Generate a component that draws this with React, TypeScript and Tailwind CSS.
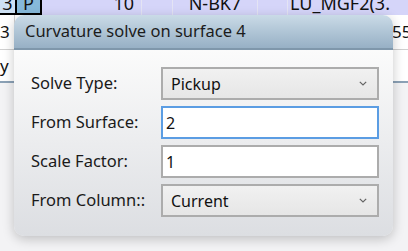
import React from 'react';

const font = { fontFamily: '"Noto Sans", "Open Sans", sans-serif' };

function Chevron() {
    return (
        <svg width="8" height="5" viewBox="0 0 8 5" className="text-[#666]">
            <path d="M0.8 0.8 L4 4 L7.2 0.8" fill="none" stroke="currentColor" strokeWidth="1.2" />
        </svg>
    );
}

function Dropdown({ value }: { value: string }) {
    return (
        <div className="h-[33px] flex items-center justify-between border-2 border-[#acacac] bg-gradient-to-b from-[#f1f1f1] to-[#e6e6e6] pl-[8px] pr-[10px] text-[16px] text-[#111]">
            <span>{value}</span>
            <Chevron />
        </div>
    );
}

function TextBox({ value, focused }: { value: string; focused?: boolean }) {
    return (
        <div
            className={
                focused
                    ? 'h-[33px] flex items-center border-2 border-[#5b9de3] bg-white pl-[3px] text-[16px] text-[#111]'
                    : 'h-[33px] flex items-center border-2 border-[#acacac] bg-white pl-[3px] text-[16px] text-[#111]'
            }
        >
            {value}
        </div>
    );
}

function Row({ label, children }: { label: string; children: React.ReactNode }) {
    return (
        <div className="flex items-center">
            <div className="w-[130px] text-[16.5px] text-[#1a1a1a] whitespace-nowrap">{label}</div>
            <div className="flex-1">{children}</div>
        </div>
    );
}

export default function App() {
    return (
        <div className="relative w-[408px] h-[251px] overflow-hidden bg-[#f3f3f5]" style={font}>
            {/* grid behind the dialog */}
            <div className="flex h-[15px] bg-[#d5d5f9] text-[18px] leading-none text-[#111] overflow-hidden">
                <div className="w-[15px] bg-[#cde0f3] border-b-2 border-black flex items-end justify-center">
                    <span className="mb-[1px]">3</span>
                </div>
                <div className="w-[27px] bg-[#86b9da] border-x-2 border-b-2 border-black flex items-end justify-center">
                    <span className="mb-[1px]">P</span>
                </div>
                <div className="w-[100px] border-r border-[#e4e4f4] flex items-end justify-end pr-[7px]">
                    <span className="mb-[3px]">10</span>
                </div>
                <div className="w-[31px] border-r border-[#e4e4f4]" />
                <div className="w-[85px] border-r border-[#e4e4f4] flex items-end justify-center">
                    <span className="mb-[3px]">N-BK7</span>
                </div>
                <div className="w-[30px] border-r border-[#e4e4f4]" />
                <div className="flex-1 flex items-end pl-[2px] whitespace-nowrap">
                    <span className="mb-[3px]">LU_MGF2(3.</span>
                </div>
            </div>
            <div className="flex h-[35px] bg-white border-b border-[#d0d0d0] text-[17px] text-[#111]">
                <div className="w-[15px] border-r border-[#cfcfcf] flex items-center">3</div>
                <div className="flex-1" />
                <div className="w-[16px] flex items-center whitespace-nowrap">55</div>
            </div>
            <div className="flex h-[33px] bg-white border-b-2 border-[#8ba1b6] text-[17px] text-[#111]">
                <div className="w-[15px] border-r border-[#cfcfcf] flex items-center">y</div>
                <div className="flex-1" />
            </div>

            {/* dialog window */}
            <div className="absolute left-[14px] top-[15px] w-[379px] h-[221px] rounded-[10px] overflow-hidden shadow-[0_3px_12px_rgba(0,0,0,0.22)] flex flex-col">
                <div className="h-[35px] bg-gradient-to-b from-[#cadbe7] to-[#97b0c5] border-b-2 border-[#7f97ab] flex items-center pl-[11px] text-[16.5px] text-[#1c1c1c] whitespace-nowrap">
                    Curvature solve on surface 4
                </div>
                <div className="flex-1 bg-gradient-to-b from-[#fbfbfb] to-[#dcdee2] pl-[17px] pr-[14px] pt-[17px] flex flex-col gap-[6px]">
                    <Row label="Solve Type:">
                        <Dropdown value="Pickup" />
                    </Row>
                    <Row label="From Surface:">
                        <TextBox value="2" focused />
                    </Row>
                    <Row label="Scale Factor:">
                        <TextBox value="1" />
                    </Row>
                    <Row label="From Column::">
                        <Dropdown value="Current" />
                    </Row>
                </div>
            </div>
        </div>
    );
}
